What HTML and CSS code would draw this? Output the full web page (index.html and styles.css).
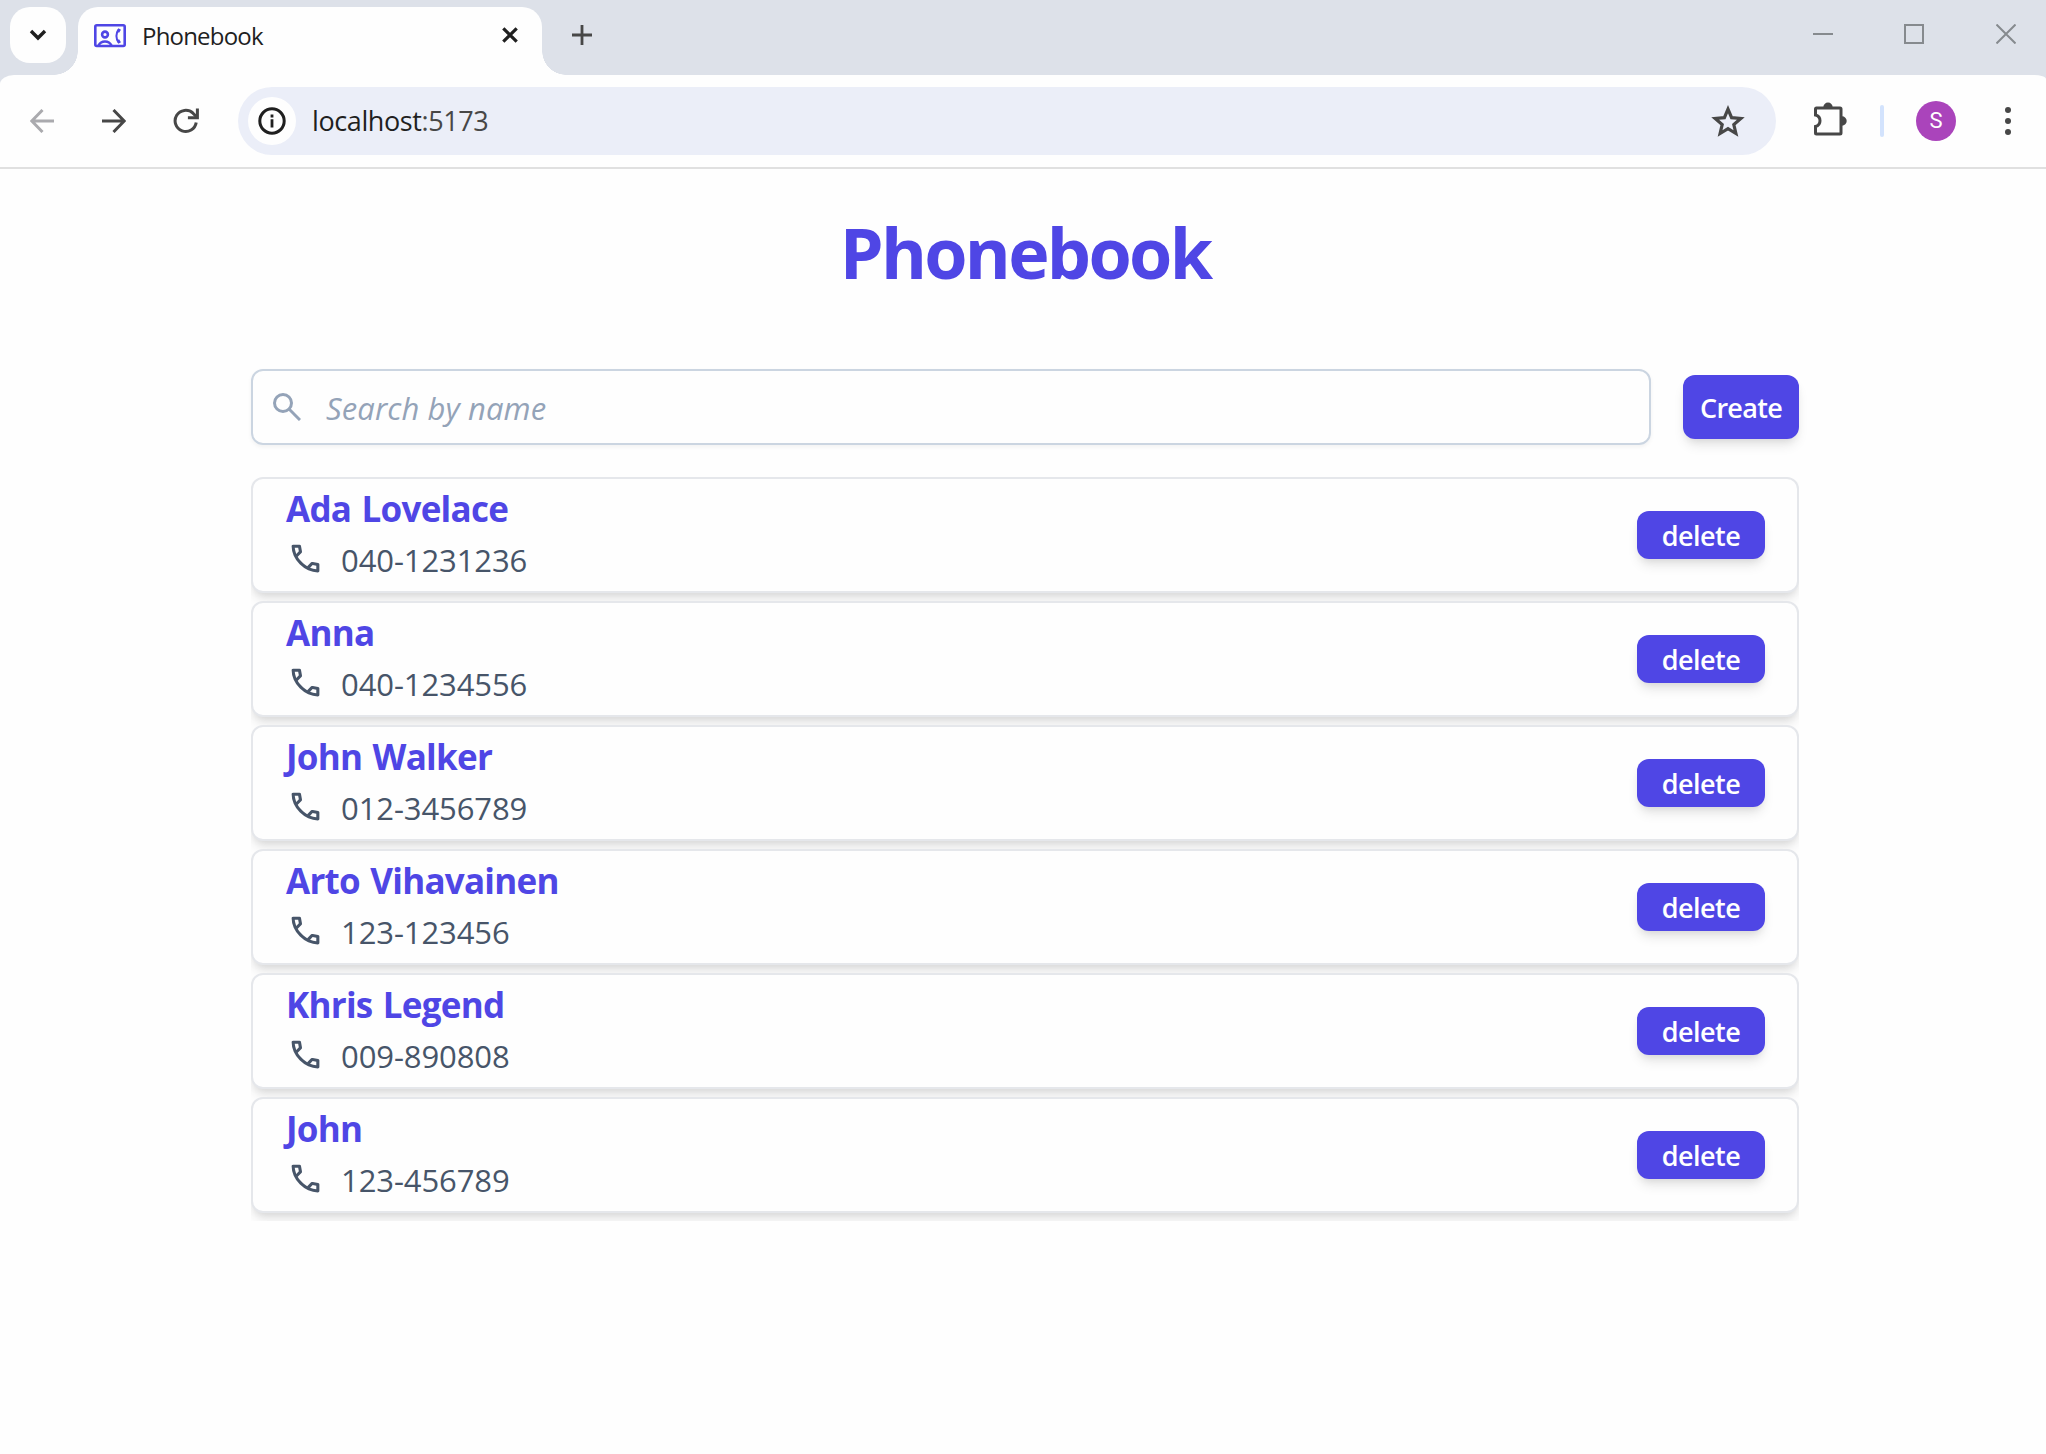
FILE: index.html
```html
<!DOCTYPE html>
<html lang="en">
<head>
<meta charset="utf-8">
<title>Phonebook</title>
<link rel="stylesheet" href="styles.css">
</head>
<body>
<svg class="sprite" aria-hidden="true">
  <symbol id="phone" viewBox="0 0 24 24"><path fill="currentColor" d="M19.95 21q-3.125 0-6.175-1.362t-5.55-3.863t-3.862-5.55T3 4.05q0-.45.3-.75t.75-.3H8.1q.35 0 .625.238t.325.562l.65 3.5q.05.4-.025.675T9.4 8.45L6.975 10.900q.5.925 1.187 1.787t1.513 1.663q.775.775 1.625 1.438T13.100 17l2.350-2.350q.225-.225.588-.337t.712-.063l3.450.700q.35.100.575.363T21 15.900v4.050q0 .45-.3.75t-.75.3ZM6.025 9l1.650-1.650L7.250 5H5.025q.125 1.025.35 2.025T6.025 9Zm8.950 8.950q.975.425 1.988.675T19 18.950v-2.200l-2.350-.475l-1.675 1.675Z"/></symbol>
</svg>

<header class="browser">
  <div class="tabstrip">
    <button class="tab-search"><svg width="18" height="12" viewBox="0 0 18 12"><path d="M2 2l7 7 7-7" fill="none" stroke="#1f1f1f" stroke-width="3.4"/></svg></button>
    <div class="tab">
      <svg class="favicon" width="32" height="24" viewBox="0 0 32 24" fill="none" stroke="#4f46e5" stroke-width="2.6">
        <rect x="1.300" y="1.300" width="29.400" height="20.700" rx="1.500"/>
        <circle cx="11" cy="10.500" r="2.900"/>
        <path d="M4.500 21.500c1.500-3 3.700-4 6.500-4s5 1 6.500 4"/>
        <path stroke-width="2" d="M24.800 5.500c-3.200 3.800-3.200 9.200 0 13"/>
        <path stroke-width="3" d="M23.800 8l1.900-3M23.800 16l1.900 3"/>
      </svg>
      <span class="tab-title">Phonebook</span>
      <svg class="tab-close" width="16" height="16" viewBox="0 0 16 16"><path d="M1.300 1.300l13.400 13.400M14.700 1.300L1.300 14.700" stroke="#1f1f1f" stroke-width="3.200"/></svg>
    </div>
    <svg class="tab-add" width="20" height="20" viewBox="0 0 20 20"><path d="M10 0v20M0 10h20" stroke="#474747" stroke-width="2.800"/></svg>
    <div class="window-controls">
      <svg width="20" height="20" viewBox="0 0 20 20"><path d="M0 10h20" stroke="#868a8e" stroke-width="2"/></svg>
      <svg class="maximize" width="20" height="20" viewBox="0 0 20 20"><rect x="1" y="1" width="18" height="18" fill="none" stroke="#868a8e" stroke-width="2"/></svg>
      <svg width="20" height="20" viewBox="0 0 20 20"><path d="M.5.5l19 19M19.500.5l-19 19" stroke="#868a8e" stroke-width="2"/></svg>
    </div>
  </div>
  <div class="toolbar-bg">
    <div class="toolbar">
      <svg width="24" height="24" viewBox="0 0 24 24" fill="none" stroke="#aaaaae" stroke-width="3"><path d="M24 12H2.500M12.500 1L1.800 12l10.700 11"/></svg>
      <svg class="forward" width="24" height="24" viewBox="0 0 24 24" fill="none" stroke="#474747" stroke-width="3"><path d="M0 12h21.500M11.500 1l10.700 11-10.700 11"/></svg>
      <svg class="reload" width="26" height="26" viewBox="0 0 26 26" fill="none" stroke="#474747" stroke-width="3"><path d="M23.200 14.500A10.600 10.600 0 1 1 20 5.200l3.500 3.600"/><path d="M24.400.5v9.200H14.900"/></svg>
      <div class="omnibox">
        <span class="site-info"><svg width="28" height="28" viewBox="0 0 28 28"><circle cx="14" cy="14" r="12.200" fill="none" stroke="#1f1f1f" stroke-width="3"/><path d="M14 12.200v8.300M14 7.500v3" stroke="#1f1f1f" stroke-width="2.800"/></svg></span>
        <span class="url">localhost<span class="port">:5173</span></span>
        <svg class="star" width="34" height="32" viewBox="0 0 34 32"><path d="M17 4.200l3.600 8.500 9.200.8-7 6 2.100 9-7.900-4.800-7.900 4.800 2.100-9-7-6 9.200-.8z" fill="none" stroke="#474747" stroke-width="3.200"/></svg>
      </div>
      <svg class="puzzle" width="34" height="34" viewBox="0 0 34 34"><path d="M3.500 6H27a1 1 0 0 1 1 1v24a1 1 0 0 1-1 1H3.500a1 1 0 0 1-1-1v-6.500c6-1.500 6-10 0-11.500V7a1 1 0 0 1 1-1z" fill="none" stroke="#474747" stroke-width="3"/><path d="M10.300 5.500a4.700 5 0 0 1 9.400 0zM29 14.300a4.700 4.700 0 0 1 0 9.400z" fill="#474747"/></svg>
      <span class="divider"></span>
      <span class="avatar">S</span>
      <svg class="menu" width="6" height="28" viewBox="0 0 6 28" fill="#474747"><circle cx="3" cy="3" r="3"/><circle cx="3" cy="14" r="3"/><circle cx="3" cy="25" r="3"/></svg>
    </div>
  </div>
</header>

<main class="page">
  <h1 class="title">Phonebook</h1>
  <div class="controls">
    <div class="search">
      <svg width="28" height="28" viewBox="0 0 28 28" fill="none" stroke="#94a3b8" stroke-width="3"><circle cx="10" cy="10" r="8.500"/><path d="M16 16l11 11"/></svg>
      <span class="placeholder">Search by name</span>
    </div>
    <button class="btn create">Create</button>
  </div>
  <ul class="contacts">
    <li class="card"><div><h2 class="name">Ada Lovelace</h2><p class="number"><svg class="phone"><use href="#phone"/></svg>040-1231236</p></div><button class="btn delete">delete</button></li>
    <li class="card"><div><h2 class="name">Anna</h2><p class="number"><svg class="phone"><use href="#phone"/></svg>040-1234556</p></div><button class="btn delete">delete</button></li>
    <li class="card"><div><h2 class="name">John Walker</h2><p class="number"><svg class="phone"><use href="#phone"/></svg>012-3456789</p></div><button class="btn delete">delete</button></li>
    <li class="card"><div><h2 class="name">Arto Vihavainen</h2><p class="number"><svg class="phone"><use href="#phone"/></svg>123-123456</p></div><button class="btn delete">delete</button></li>
    <li class="card"><div><h2 class="name">Khris Legend</h2><p class="number"><svg class="phone"><use href="#phone"/></svg>009-890808</p></div><button class="btn delete">delete</button></li>
    <li class="card"><div><h2 class="name">John</h2><p class="number"><svg class="phone"><use href="#phone"/></svg>123-456789</p></div><button class="btn delete">delete</button></li>
  </ul>
</main>
</body>
</html>
```
FILE: styles.css
```css
* { box-sizing: border-box; margin: 0; padding: 0; }
html, body { height: 1454px; overflow: hidden; }
body { background: #fefefe; font-family: "Open Sans", "Noto Sans", sans-serif; }
svg { display: block; flex: none; }
button { border: 0; font-family: inherit; }
.sprite { position: absolute; width: 0; height: 0; }

.tabstrip { display: flex; height: 75px; padding: 7px 30px 0 10px; background: #dde1e9; }
.tab-search { display: flex; align-items: center; justify-content: center; width: 56px; height: 56px; border-radius: 20px; background: #fefefe; }
.tab { position: relative; display: flex; width: 464px; height: 68px; margin-left: 12px; padding: 0 24px 0 16px; border-radius: 20px 20px 0 0; background: #fefefe; }
.tab::before, .tab::after { content: ""; position: absolute; bottom: 0; width: 24px; height: 24px; }
.tab::before { left: -24px; background: radial-gradient(circle at 0 0, transparent 23.5px, #fefefe 24px); }
.tab::after { right: -24px; background: radial-gradient(circle at 100% 0, transparent 23.5px, #fefefe 24px); }
.favicon { margin-top: 17px; }
.tab-title { margin: 12px 0 0 16px; font-size: 24px; line-height: 34px; letter-spacing: -0.8px; color: #1f1f1f; white-space: nowrap; }
.tab-close { margin: 20px 0 0 auto; }
.tab-add { margin: 18px 0 0 30px; }
.window-controls { display: flex; margin: 17px 0 0 auto; }
.maximize { margin: 0 72px 0 71px; }

.toolbar-bg { background: #dde1e9; }
.toolbar { display: flex; align-items: center; height: 94px; padding: 0 35px 0 30px; border-bottom: 2px solid #e0e0e0; border-top-left-radius: 14px 9px; border-top-right-radius: 12px 4px; background: #fefefe; }
.forward { margin-left: 48px; }
.reload { margin-left: 47px; }
.omnibox { display: flex; align-items: center; width: 1538px; height: 68px; margin-left: 39px; padding: 0 31px 0 10px; border-radius: 34px; background: #ebeef8; }
.site-info { display: flex; align-items: center; justify-content: center; width: 48px; height: 48px; border-radius: 50%; background: #fefefe; }
.url { margin: -2px 0 0 16px; font-size: 27px; letter-spacing: -0.4px; color: #1f1f1f; }
.port { color: #474747; }
.star { margin-left: auto; }
.puzzle { margin: -4px 0 0 37px; }
.divider { width: 4px; height: 32px; margin-left: 33px; border-radius: 2px; background: #d3e3fd; }
.avatar { width: 40px; height: 40px; margin-left: 32px; border-radius: 50%; background: #aa44bb; color: #fff; font: 22px/40px Roboto, sans-serif; text-align: center; }
.menu { margin-left: 49px; }

.page { width: 1548px; margin-left: 251px; }
.title { height: 200px; padding: 34px 0 0 0; font-size: 70px; line-height: 98px; letter-spacing: -2.7px; text-align: center; color: #4f46e5; }
.controls { display: flex; align-items: center; justify-content: space-between; height: 76px; }
.search { display: flex; align-items: center; width: 1400px; height: 76px; padding: 0 20px; border: 2px solid #cbd5e1; border-radius: 12px; box-shadow: 0 2px 4px rgb(0 0 0 / 5%); }
.placeholder { margin: 2px 0 0 25px; font-size: 31px; font-style: italic; letter-spacing: 0.1px; color: #94a3b8; }
.btn { border-radius: 12px; background: #4f46e5; color: #fff; font-size: 27px; font-weight: 600; text-align: center; box-shadow: 0 8px 12px -2px rgb(0 0 0 / 10%), 0 4px 8px -4px rgb(0 0 0 / 10%); }
.create { width: 116px; height: 64px; letter-spacing: -0.7px; }
.contacts { margin-top: 32px; overflow: hidden; list-style: none; }
.card { display: flex; align-items: center; justify-content: space-between; height: 116px; margin-bottom: 8px; padding: 0 32px 0 33px; border: 2px solid #e5e7eb; border-radius: 12px; background: #fefefe; box-shadow: 0 8px 12px -2px rgb(0 0 0 / 10%), 0 4px 8px -4px rgb(0 0 0 / 10%); }
.name { padding-bottom: 1px; font-size: 35px; line-height: 50px; letter-spacing: -0.75px; word-spacing: 2px; color: #4f46e5; }
.number { display: flex; align-items: center; height: 52px; padding-bottom: 2px; font-size: 31px; color: #475569; letter-spacing: -0.1px; }
.phone { width: 37px; height: 37px; margin: -2px 17px 0 1px; }
.delete { width: 128px; height: 48px; letter-spacing: -0.5px; }
```
